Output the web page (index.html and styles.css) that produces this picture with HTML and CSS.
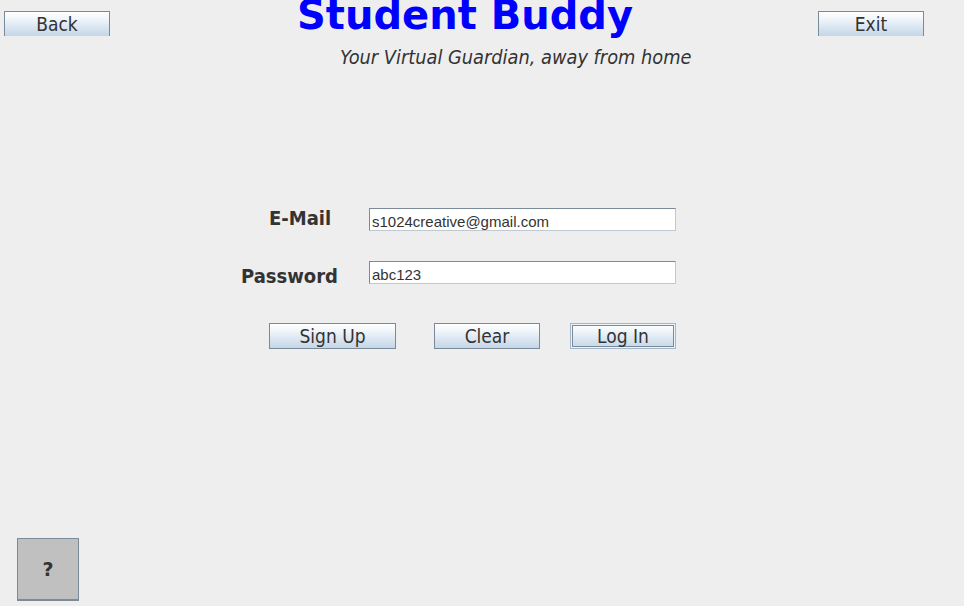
FILE: index.html
```html
<!DOCTYPE html>
<html>
<head>
<meta charset="utf-8">
<link rel="stylesheet" href="styles.css">
</head>
<body>
<div class="page">
  <header class="top">
    <button class="btn btn-back">Back</button>
    <div class="titles">
      <h1 class="title">Student Buddy</h1>
      <p class="subtitle">Your Virtual Guardian, away from home</p>
    </div>
    <button class="btn btn-exit">Exit</button>
  </header>

  <form class="login">
    <div class="row row-email">
      <label class="label label-email">E-Mail</label>
      <div class="field">s1024creative@gmail.com</div>
    </div>
    <div class="row row-pass">
      <label class="label label-pass">Password</label>
      <div class="field">abc123</div>
    </div>
    <div class="actions">
      <button type="button" class="btn btn-signup">Sign Up</button>
      <button type="button" class="btn btn-clear">Clear</button>
      <button type="button" class="btn btn-login">Log In</button>
    </div>
  </form>

  <button class="help">?</button>
</div>
</body>
</html>
```

FILE: styles.css
```css
html, body {
  margin: 0;
  padding: 0;
  background: #eeeeee;
  overflow: hidden;
}

.page {
  width: 964px;
  height: 606px;
  display: flex;
  flex-direction: column;
  font-family: "DejaVu Sans Condensed", "DejaVu Sans", sans-serif;
  color: #333333;
}

.btn {
  box-sizing: border-box;
  height: 26px;
  padding: 0;
  margin: 0;
  border: 1px solid #7a8a99;
  background: linear-gradient(to bottom, #ffffff 0%, #f3f7fb 25%, #dce7f2 60%, #c4d6e8 100%);
  font-family: "DejaVu Sans Condensed", "DejaVu Sans", sans-serif;
  font-size: 19px;
  line-height: 22px;
  color: #333333;
  text-align: center;
}

.top {
  display: flex;
  align-items: flex-start;
  height: 80px;
}

.btn-back {
  width: 106px;
  height: 25px;
  margin: 11px 0 0 4px;
  border-bottom: none;
}

.btn-exit {
  width: 106px;
  height: 25px;
  margin: 11px 40px 0 auto;
  border-bottom: none;
}

.titles {
  display: flex;
  flex-direction: column;
  margin-left: 187px;
}

.title {
  margin: -10px 0 0 0;
  font-family: "DejaVu Sans", sans-serif;
  font-weight: bold;
  font-size: 40px;
  line-height: 50px;
  color: #0000ff;
  white-space: nowrap;
}

.subtitle {
  margin: 7px 0 0 43px;
  font-style: italic;
  font-size: 19.8px;
  line-height: 22px;
  white-space: nowrap;
  color: #333333;
}

.login {
  margin: 128px 0 0 0;
  display: flex;
  flex-direction: column;
}

.row {
  display: flex;
  align-items: center;
  height: 22px;
}

.row-pass {
  margin-top: 31px;
}

.label {
  font-weight: bold;
  font-size: 20px;
  white-space: nowrap;
}

.label-email {
  margin-left: 269px;
  width: 100px;
  position: relative;
  top: -1px;
}

.label-pass {
  margin-left: 241px;
  width: 128px;
  position: relative;
  top: 4px;
}

.field {
  box-sizing: border-box;
  width: 307px;
  height: 23px;
  border: 1px solid #7a8a99;
  border-right-color: #c0c8d0;
  border-bottom-color: #c0c8d0;
  background: #ffffff;
  font-family: "Liberation Sans", Arial, sans-serif;
  font-size: 15px;
  line-height: 25px;
  padding-left: 2px;
  color: #333333;
}

.actions {
  display: flex;
  margin-top: 40px;
  padding-left: 269px;
}

.btn-signup {
  width: 127px;
}

.btn-clear {
  width: 106px;
  margin-left: 38px;
}

.btn-login {
  width: 106px;
  margin-left: 30px;
  border-color: #a3b8cc;
  box-shadow: inset 0 0 0 1px #eef3f8, inset 0 0 0 2px #7a8a99;
}

.help {
  box-sizing: border-box;
  width: 62px;
  height: 63px;
  margin: auto 0 5px 17px;
  padding: 0;
  border: 1px solid #7a8a99;
  border-bottom: 2px solid #7a8a99;
  background: #c0c0c0;
  font-family: "DejaVu Sans", sans-serif;
  font-weight: bold;
  font-size: 19px;
  color: #333333;
}
```
